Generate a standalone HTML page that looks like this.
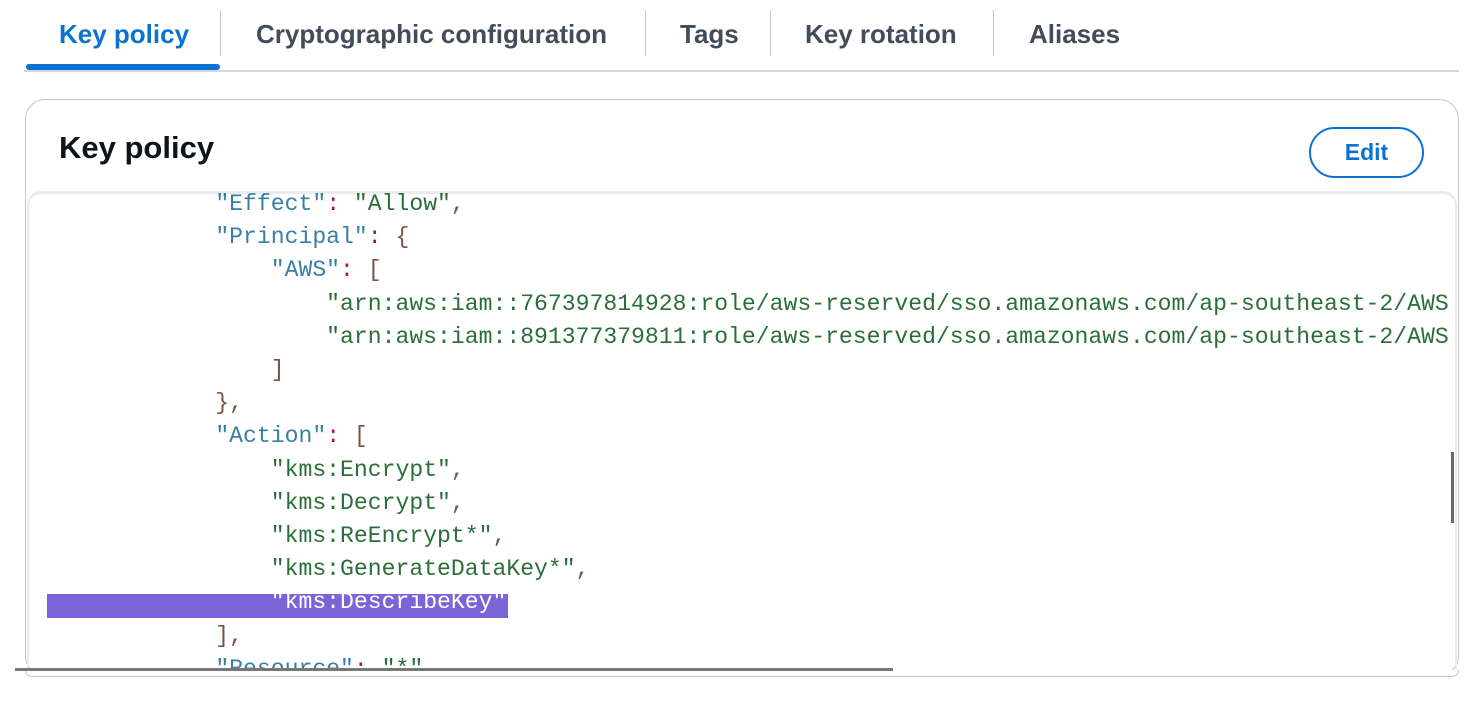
<!DOCTYPE html>
<html><head><meta charset="utf-8"><style>
html,body{margin:0;padding:0;background:#fff;width:1474px;height:712px;overflow:hidden;position:relative;font-family:"Liberation Sans",sans-serif}
.tab{position:absolute;top:19px;font-weight:bold;font-size:26px;color:#414d5c;white-space:nowrap}
.sep{position:absolute;top:10px;width:1px;height:46px;background:#c6c6cd}
.card{position:absolute;left:25px;top:99px;width:1434px;height:577px;border:1px solid #c6c6cd;border-radius:20px;box-sizing:border-box;overflow:hidden}
pre{position:absolute;left:49px;top:188px;margin:0;font-family:"Liberation Mono",monospace;font-size:23.1px;line-height:33.2px;color:#795548;white-space:pre}
.k{color:#3a7fa3}.s{color:#2a6e3a}.p{color:#a3154a}
.hl{position:absolute;left:47px;top:594px;width:461px;height:24px;background:#7b63d8}
</style></head><body>
<div class="tab" style="left:59px;color:#0972d3">Key policy</div>
<div class="sep" style="left:220px"></div>
<div class="tab" style="left:256px">Cryptographic configuration</div>
<div class="sep" style="left:645px"></div>
<div class="tab" style="left:680px">Tags</div>
<div class="sep" style="left:770px"></div>
<div class="tab" style="left:805px">Key rotation</div>
<div class="sep" style="left:993px"></div>
<div class="tab" style="left:1029px">Aliases</div>
<div style="position:absolute;left:24px;top:70px;width:1435px;height:2px;background:#d5d5da"></div>
<div style="position:absolute;left:26px;top:64px;width:194px;height:6px;background:#0972d3;border-radius:3px"></div>
<div class="card"></div>
<div style="position:absolute;left:59px;top:130px;font-size:31px;font-weight:bold;color:#0f141a">Key policy</div>
<div style="position:absolute;left:1309px;top:127px;width:115px;height:51px;box-sizing:border-box;border:2px solid #0972d3;border-radius:26px;color:#0972d3;font-weight:bold;font-size:23px;text-align:center;line-height:47px">Edit</div>
<div style="position:absolute;left:27px;top:191px;width:1430px;height:484px;border-top:3px solid #e9ebed;border-left:2px solid #e9ebed;border-right:2px solid #e9ebed;border-radius:14px 14px 0 0;box-sizing:border-box"></div>
<div class="hl"></div>
<pre>            <span class="k">"Effect"</span><span class="p">:</span> <span class="s">"Allow"</span>,
            <span class="k">"Principal"</span><span class="p">:</span> {
                <span class="k">"AWS"</span><span class="p">:</span> [
                    <span class="s">"arn:aws:iam::767397814928:role/aws-reserved/sso.amazonaws.com/ap-southeast-2/AWS</span>
                    <span class="s">"arn:aws:iam::891377379811:role/aws-reserved/sso.amazonaws.com/ap-southeast-2/AWS</span>
                ]
            },
            <span class="k">"Action"</span><span class="p">:</span> [
                <span class="s">"kms:Encrypt"</span>,
                <span class="s">"kms:Decrypt"</span>,
                <span class="s">"kms:ReEncrypt*"</span>,
                <span class="s">"kms:GenerateDataKey*"</span>,
                <span style="color:#fff">"kms:DescribeKey"</span>
            ],
            <span class="k">"Resource"</span><span class="p">:</span> <span class="s">"*"</span></pre>
<div style="position:absolute;left:0;top:677px;width:1474px;height:35px;background:#fff"></div>
<div style="position:absolute;left:25px;top:670px;width:1434px;height:7px;background:#fff;border:1px solid #c6c6cd;border-top:none;border-radius:0 0 7px 7px;box-sizing:border-box"></div>
<div style="position:absolute;left:15px;top:668px;width:878px;height:3px;background:#777"></div>
<div style="position:absolute;left:1451px;top:452px;width:3px;height:71px;background:#666"></div>
</body></html>
